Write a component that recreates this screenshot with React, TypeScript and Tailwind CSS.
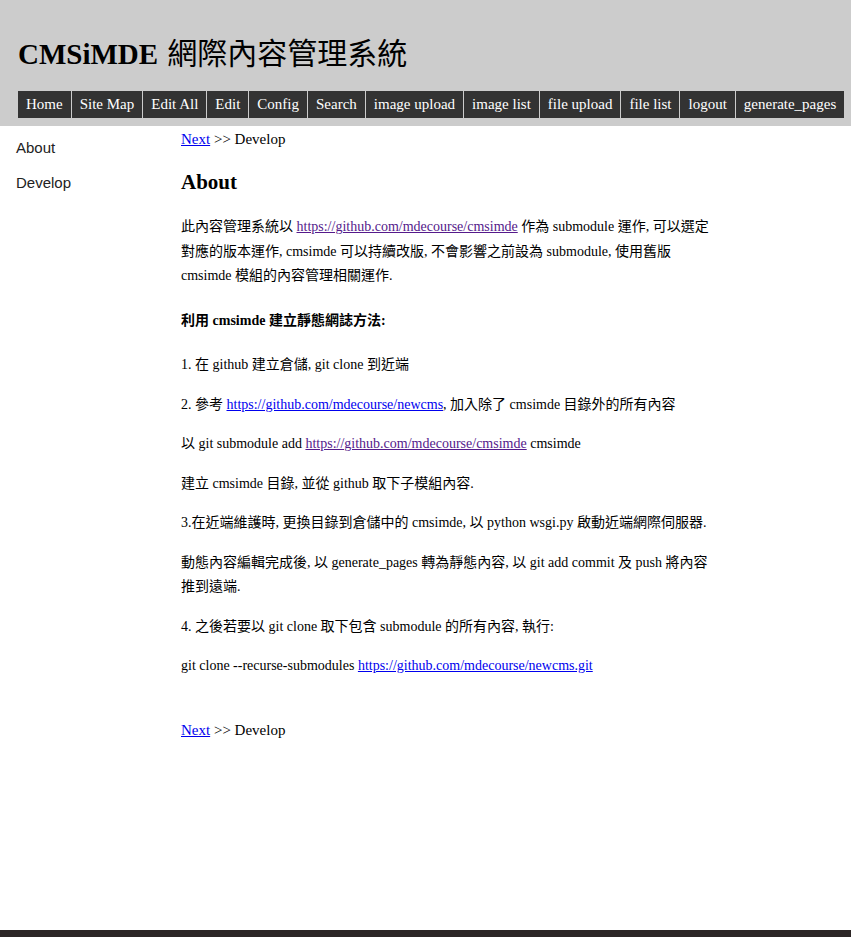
const navItems = [
  "Home",
  "Site Map",
  "Edit All",
  "Edit",
  "Config",
  "Search",
  "image upload",
  "image list",
  "file upload",
  "file list",
  "logout",
  "generate_pages",
];

const serif = "font-['Liberation_Serif','Noto_Sans_CJK_TC',serif]";
const visited = "text-[#551a8b] underline";
const link = "text-[#0000ee] underline";

function PageNav() {
  return (
    <div className="text-[15px] leading-[18px] text-black">
      <a href="#" className={link}>
        Next
      </a>{" "}
      &gt;&gt; Develop
    </div>
  );
}

export default function App() {
  return (
    <div className={`min-h-[937px] flex flex-col bg-white ${serif}`}>
      {/* Header */}
      <header className="bg-[#cccccc] h-[126px] pl-[18px] pt-[36px]">
        <h1 className="text-[29px] leading-[36px] text-black flex items-baseline">
          <span className="font-bold">CMSiMDE</span>
          <span className="ml-[9px] text-[30px] font-normal">網際內容管理系統</span>
        </h1>
        <nav className="flex mt-[19px] h-[27px]">
          {navItems.map((item) => (
            <a
              key={item}
              href="#"
              className="bg-[#333333] text-white text-[15px] leading-[27px] px-[8px] mr-px whitespace-nowrap"
            >
              {item}
            </a>
          ))}
        </nav>
      </header>

      <div className="flex flex-1">
        {/* Sidebar */}
        <aside className="w-[181px] shrink-0 pl-[16px] pt-[12px] font-['Liberation_Sans',sans-serif] text-[15px] text-[#222]">
          <div className="leading-[20px]">About</div>
          <div className="leading-[20px] mt-[15px]">Develop</div>
        </aside>

        {/* Content */}
        <main className="w-[540px] pt-[4px] text-black">
          <PageNav />
          <h2 className="text-[21px] font-bold leading-[26px] mt-[21px] mb-[20px]">About</h2>
          <div className="text-[14px] leading-[24.5px] space-y-[15px]">
            <p>
              此內容管理系統以{" "}
              <a href="#" className={visited}>
                https://github.com/mdecourse/cmsimde
              </a>{" "}
              作為 submodule 運作, 可以選定對應的版本運作, cmsimde 可以持續改版, 不會影響之前設為 submodule, 使用舊版
              cmsimde 模組的內容管理相關運作.
            </p>
            <p className="font-bold pt-[5px]">利用 cmsimde 建立靜態網誌方法:</p>
            <p className="pt-[5px]">1. 在 github 建立倉儲, git clone 到近端</p>
            <p>
              2. 參考{" "}
              <a href="#" className={link}>
                https://github.com/mdecourse/newcms
              </a>
              , 加入除了 cmsimde 目錄外的所有內容
            </p>
            <p>
              以 git submodule add{" "}
              <a href="#" className={visited}>
                https://github.com/mdecourse/cmsimde
              </a>{" "}
              cmsimde
            </p>
            <p>建立 cmsimde 目錄, 並從 github 取下子模組內容.</p>
            <p>3.在近端維護時, 更換目錄到倉儲中的 cmsimde, 以 python wsgi.py 啟動近端網際伺服器.</p>
            <p>
              動態內容編輯完成後, 以 generate_pages 轉為靜態內容, 以 git add commit 及 push 將內容推到遠端.
            </p>
            <p>4. 之後若要以 git clone 取下包含 submodule 的所有內容, 執行:</p>
            <p>
              git clone --recurse-submodules{" "}
              <a href="#" className={link}>
                https://github.com/mdecourse/newcms.git
              </a>
            </p>
          </div>
          <div className="mt-[42px]">
            <PageNav />
          </div>
        </main>
      </div>

      <footer className="h-[7px] bg-[#2c2626]" />
    </div>
  );
}
